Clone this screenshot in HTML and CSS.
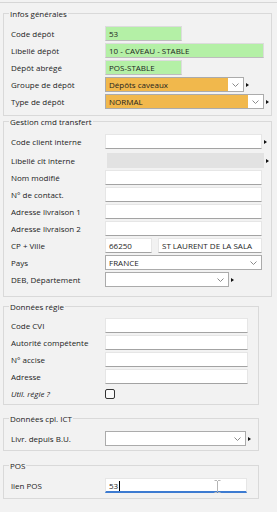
FILE: index.html
```html
<!DOCTYPE html>
<html lang="fr">
<head>
    <meta charset="UTF-8">
    <meta name="viewport" content="width=device-width, initial-scale=1.0">
    <title>Dépôt</title>
    <link rel="stylesheet" href="styles.css">
</head>
<body>
    <div class="tabline"></div>

    <fieldset class="group group-wide group-infos">
        <legend>Infos générales</legend>
        <div class="row">
            <label>Code dépôt</label>
            <div class="field field-green w-77">53</div>
        </div>
        <div class="row">
            <label>Libellé dépôt</label>
            <div class="field field-green w-159">10 - CAVEAU - STABLE</div>
        </div>
        <div class="row">
            <label>Dépôt abrégé</label>
            <div class="field field-green w-77">POS-STABLE</div>
        </div>
        <div class="row">
            <label>Groupe de dépôt</label>
            <div class="select select-orange w-139">
                <span class="select-value">Dépôts caveaux</span>
                <span class="select-btn"><svg width="7" height="4" viewBox="0 0 7 4"><polyline points="0.5,0.5 3.5,3.5 6.5,0.5" fill="none" stroke="#8a8a8a" stroke-width="1"/></svg></span>
            </div>
            <span class="more"></span>
        </div>
        <div class="row">
            <label>Type de dépôt</label>
            <div class="select select-orange w-159">
                <span class="select-value">NORMAL</span>
                <span class="select-btn"><svg width="7" height="4" viewBox="0 0 7 4"><polyline points="0.5,0.5 3.5,3.5 6.5,0.5" fill="none" stroke="#8a8a8a" stroke-width="1"/></svg></span>
            </div>
            <span class="more"></span>
        </div>
    </fieldset>

    <fieldset class="group group-wide group-transfert">
        <legend>Gestion cmd transfert</legend>
        <div class="row row-first">
            <label>Code client interne</label>
            <div class="field w-157"></div>
            <span class="more"></span>
        </div>
        <div class="row">
            <label>Libellé clt interne</label>
            <div class="field field-disabled w-157"></div>
            <span class="more"></span>
        </div>
        <div class="row">
            <label>Nom modifié</label>
            <div class="field w-157"></div>
        </div>
        <div class="row">
            <label>N° de contact.</label>
            <div class="field w-157"></div>
        </div>
        <div class="row">
            <label>Adresse livraison 1</label>
            <div class="field w-157"></div>
        </div>
        <div class="row">
            <label>Adresse livraison 2</label>
            <div class="field w-157"></div>
        </div>
        <div class="row">
            <label>CP + Ville</label>
            <div class="field w-47">66250</div>
            <div class="field w-104 field-city">ST LAURENT DE LA SALA</div>
        </div>
        <div class="row">
            <label>Pays</label>
            <div class="select w-157">
                <span class="select-value">FRANCE</span>
                <span class="select-btn"><svg width="7" height="4" viewBox="0 0 7 4"><polyline points="0.5,0.5 3.5,3.5 6.5,0.5" fill="none" stroke="#8a8a8a" stroke-width="1"/></svg></span>
            </div>
        </div>
        <div class="row">
            <label>DEB, Département</label>
            <div class="select w-124">
                <span class="select-value"></span>
                <span class="select-btn"><svg width="7" height="4" viewBox="0 0 7 4"><polyline points="0.5,0.5 3.5,3.5 6.5,0.5" fill="none" stroke="#8a8a8a" stroke-width="1"/></svg></span>
            </div>
            <span class="more"></span>
        </div>
    </fieldset>

    <fieldset class="group group-narrow group-regie">
        <legend>Données régie</legend>
        <div class="row">
            <label>Code CVI</label>
            <div class="field w-143"></div>
        </div>
        <div class="row">
            <label>Autorité compétente</label>
            <div class="field w-143"></div>
        </div>
        <div class="row">
            <label>N° accise</label>
            <div class="field w-143"></div>
        </div>
        <div class="row">
            <label>Adresse</label>
            <div class="field w-143"></div>
        </div>
        <div class="row">
            <label class="label-italic">Util. régie ?</label>
            <span class="checkbox"></span>
        </div>
    </fieldset>

    <fieldset class="group group-narrow group-ict">
        <legend>Données cpl. ICT</legend>
        <div class="row">
            <label>Livr. depuis B.U.</label>
            <div class="select w-141">
                <span class="select-value"></span>
                <span class="select-btn"><svg width="7" height="4" viewBox="0 0 7 4"><polyline points="0.5,0.5 3.5,3.5 6.5,0.5" fill="none" stroke="#8a8a8a" stroke-width="1"/></svg></span>
            </div>
            <span class="more"></span>
        </div>
    </fieldset>

    <fieldset class="group group-narrow group-pos">
        <legend>POS</legend>
        <div class="row">
            <label>lien POS</label>
            <div class="field field-focus w-142">53<span class="caret"></span>
                <svg class="ibeam" width="7" height="13" viewBox="0 0 7 13"><path d="M0.5 0.5h2.5M4 0.5h2.5M3.5 1v11M0.5 12.5h2.5M4 12.5h2.5" fill="none" stroke="#b5b5b5" stroke-width="1"/></svg>
            </div>
        </div>
    </fieldset>
</body>
</html>
```

FILE: styles.css
```css
* {
    box-sizing: border-box;
}

body {
    margin: 0;
    width: 277px;
    background-color: #f2f2f2;
    color: #1e1e1e;
    font-family: "Open Sans", "Noto Sans", sans-serif;
    font-size: 8px;
}

.tabline {
    height: 3px;
    border-bottom: 1px solid #d6d6d6;
}

/* Group boxes */
.group {
    margin: 0 0 0 3px;
    border: 1px solid #d9d9d9;
    padding: 7px 6px 6px 7px;
    min-width: 0;
}

.group legend {
    padding: 0 1px;
    margin-left: -2px;
    line-height: 11px;
    color: #222;
}

.group-wide {
    width: 269px;
}

.group-narrow {
    width: 256px;
}

.group-infos {
    margin-top: 5px;
}

.group-transfert {
    margin-top: 0;
    padding-bottom: 9px;
}

.group-regie {
    margin-top: 4px;
    padding-top: 6px;
    padding-bottom: 3px;
}

.group-ict {
    margin-top: 8px;
    padding-bottom: 4px;
}

.group-pos {
    margin-top: 9px;
    padding-bottom: 5px;
}

/* Rows */
.row {
    display: flex;
    align-items: center;
    height: 15px;
    margin-bottom: 2px;
}

.row:last-child {
    margin-bottom: 0;
}

.row-first {
    margin-bottom: 4px;
}

.row label {
    width: 94px;
    flex-shrink: 0;
    color: #222;
    margin-top: -1px;
}

.label-italic {
    font-style: italic;
    color: #444;
}

/* Text fields */
.field {
    position: relative;
    height: 15px;
    padding: 0 3px;
    line-height: 13px;
    background-color: #fff;
    border: 1px solid #e6e6e6;
    border-bottom-color: #a3a3a3;
    white-space: nowrap;
    overflow: hidden;
    flex-shrink: 0;
}

.field-green {
    background-color: #b4f0a6;
    border-color: #dcdcdc;
    border-bottom-color: #bdbdbd;
}

.field-disabled {
    background-color: #e2e2e2;
    border-color: #e2e2e2;
    margin-left: 2px;
    width: 154px;
}

.field-city {
    margin-left: 6px;
}

.field-focus {
    border-bottom: 2px solid #3d7bd1;
    overflow: visible;
}

.caret {
    display: inline-block;
    width: 1px;
    height: 10px;
    margin-left: 1px;
    background-color: #000;
    vertical-align: -2px;
}

.ibeam {
    position: absolute;
    left: 108px;
    top: 1px;
}

/* Dropdowns */
.select {
    display: flex;
    height: 15px;
    background-color: #fff;
    border: 1px solid #ababab;
    flex-shrink: 0;
}

.select-value {
    flex: 1;
    padding: 0 3px;
    line-height: 13px;
    white-space: nowrap;
    overflow: hidden;
}

.select-orange .select-value {
    background-color: #f1b84c;
}

.select-btn {
    width: 15px;
    display: flex;
    align-items: center;
    justify-content: center;
    background-color: #fff;
}

/* Small black arrow next to a field */
.more {
    width: 0;
    height: 0;
    margin-left: 2px;
    border-left: 3px solid #111;
    border-top: 2.5px solid transparent;
    border-bottom: 2.5px solid transparent;
}

.checkbox {
    width: 10px;
    height: 10px;
    border: 1px solid #333;
    border-radius: 2px;
    background-color: #fafafa;
}

/* Widths */
.w-47 { width: 47px; }
.w-77 { width: 77px; }
.w-104 { width: 104px; }
.w-124 { width: 124px; }
.w-139 { width: 139px; }
.w-141 { width: 141px; }
.w-142 { width: 142px; }
.w-143 { width: 143px; }
.w-157 { width: 157px; }
.w-159 { width: 159px; }
```
